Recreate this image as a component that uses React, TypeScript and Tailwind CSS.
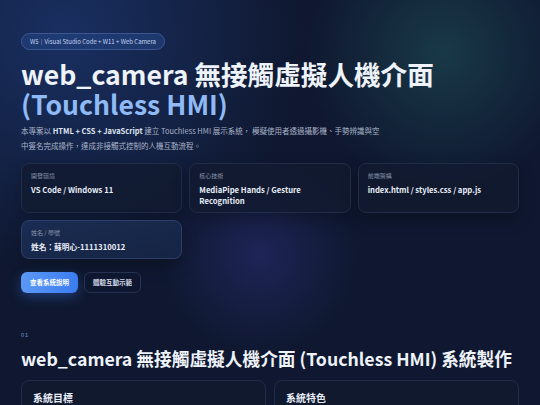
import React from 'react';

const FONT = '"Noto Sans CJK TC", "Noto Sans", sans-serif';

interface InfoCardProps {
  label: string;
  value: string;
  highlight?: boolean;
}

function InfoCard({ label, value, highlight = false }: InfoCardProps) {
  return (
    <div
      className={
        highlight
          ? 'rounded-[8px] border border-[#2b3f6b] bg-gradient-to-br from-[#1a2c52] to-[#152443] px-[9px] pt-[8px] pb-[6px] shadow-[0_6px_16px_rgba(0,0,0,0.25)]'
          : 'rounded-[8px] border border-[#212c47] bg-[#111a2f]/80 px-[9px] pt-[8px] pb-[6px] shadow-[0_6px_16px_rgba(0,0,0,0.25)]'
      }
    >
      <div className="text-[6px] leading-[8px] text-[#8a95ad]">{label}</div>
      <div className="mt-[4px] text-[7.7px] font-bold leading-[11px] text-[#e8edf7]">{value}</div>
    </div>
  );
}

export default function App() {
  return (
    <div
      className="min-h-screen w-full bg-[#0f1830] bg-[radial-gradient(circle_at_82%_12%,rgba(40,110,110,0.38),transparent_23%),radial-gradient(circle_at_48%_58%,rgba(60,60,160,0.34),transparent_26%),radial-gradient(circle_at_12%_8%,rgba(40,80,165,0.42),transparent_38%)] text-white"
      style={{ fontFamily: FONT }}
    >
      <div className="px-[21px] pt-[33px]">
        <div className="flex h-[17px] w-fit items-center rounded-full border border-[#3a5590] bg-[#22407a]/70 px-[8px] text-[6px] leading-none text-[#c4d3ef]">
          W5｜Visual Studio Code + W11 + Web Camera
        </div>

        <h1 className="mt-[9px] text-[26.6px] font-bold leading-[30px] text-[#eef2f9]">
          web_camera 無接觸虛擬人機介面
          <br />
          <span className="text-[#8fbaf5]">(Touchless HMI)</span>
        </h1>

        <p className="mt-[4px] text-[7.5px] leading-[15px] text-[#aab4c8]">
          本專案以 <b className="text-[#dfe5f0]">HTML + CSS + JavaScript</b> 建立 Touchless HMI 展示系統， 模擬使用者透過攝影機、手勢辨識與空
          <br />
          中簽名完成操作，達成非接觸式控制的人機互動流程。
        </p>

        <div className="mt-[10px] grid grid-cols-3 gap-[7px]">
          <InfoCard label="開發環境" value="VS Code / Windows 11" />
          <InfoCard label="核心技術" value="MediaPipe Hands / Gesture Recognition" />
          <InfoCard label="前端架構" value="index.html / styles.css / app.js" />
          <InfoCard label="姓名 / 學號" value="姓名：蘇明心-1111310012" highlight />
        </div>

        <div className="mt-[13px] flex gap-[6px]">
          <button className="flex h-[21px] w-[57px] items-center justify-center rounded-[6px] bg-gradient-to-r from-[#5b98f5] to-[#3b7cf0] text-[6.5px] font-bold text-white shadow-[0_4px_12px_rgba(59,124,240,0.35)]">
            查看系統說明
          </button>
          <button className="flex h-[21px] w-[57px] items-center justify-center rounded-[6px] border border-[#263253] bg-[#0f1830]/60 text-[6.5px] font-bold text-[#d5dcea]">
            體驗互動示範
          </button>
        </div>

        <div className="mt-[38px] text-[5.5px] leading-[8px] tracking-[1px] text-[#7d9fdc]">01</div>
        <h2 className="mt-[7px] text-[17.7px] font-bold leading-[24px] text-[#eef2f9]">
          web_camera 無接觸虛擬人機介面 (Touchless HMI) 系統製作
        </h2>

        <div className="mt-[10px] grid grid-cols-2 gap-[8px]">
          <div className="h-[60px] rounded-[8px] border border-[#212c47] bg-[#111a2f]/80 px-[11px] pt-[10px]">
            <div className="text-[10px] font-bold leading-[14px] text-[#e8edf7]">系統目標</div>
          </div>
          <div className="h-[60px] rounded-[8px] border border-[#212c47] bg-[#111a2f]/80 px-[11px] pt-[10px]">
            <div className="text-[10px] font-bold leading-[14px] text-[#e8edf7]">系統特色</div>
          </div>
        </div>
      </div>
    </div>
  );
}
